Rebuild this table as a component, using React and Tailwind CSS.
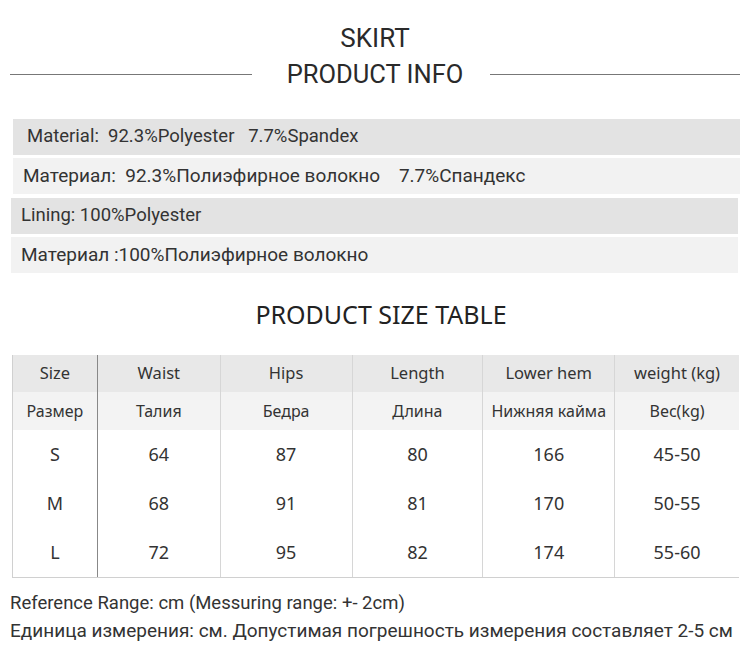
const headers = [
  ['Size', 'Размер'],
  ['Waist', 'Талия'],
  ['Hips', 'Бедра'],
  ['Length', 'Длина'],
  ['Lower hem', 'Нижняя кайма'],
  ['weight (kg)', 'Bec(kg)'],
];

const rows = [
  ['S', '64', '87', '80', '166', '45-50'],
  ['M', '68', '91', '81', '170', '50-55'],
  ['L', '72', '95', '82', '174', '55-60'],
];

const widths = ['w-[85px]', 'w-[123px]', 'w-[132px]', 'w-[131px]', 'w-[132px]', 'w-[124px]'];
const borders = ['border-r border-[#888]', 'border-r border-[#d6d6d6]', 'border-r border-[#d6d6d6]', 'border-r border-[#d6d6d6]', 'border-r border-[#d6d6d6]', ''];

export default function App() {
  return (
    <div className="w-[750px] h-[668px] bg-white text-[#333] overflow-hidden font-['Roboto',sans-serif]">
      {/* Titles */}
      <div className="pt-[23px] text-center text-[26px] leading-[30px] text-[#2a2a2a]">
        SKIRT
      </div>
      <div className="flex items-center mt-[6px] px-[10px]">
        <div className="w-[242px] h-px bg-[#777]" />
        <div className="flex-1 text-center text-[25.5px] leading-[30px] text-[#2a2a2a] pl-[8px]">PRODUCT INFO</div>
        <div className="w-[250px] h-px bg-[#777]" />
      </div>

      {/* Material rows */}
      <div className="mt-[30px] flex flex-col text-[18.5px] text-[#333]">
        <div className="ml-[13px] mr-[10px] h-[36px] bg-[#e3e3e3] flex items-center pl-[14px]">
          Material:&nbsp; 92.3%Polyester &nbsp; 7.7%Spandex
        </div>
        <div className="mt-[3px] ml-[13px] mr-[10px] h-[36px] bg-[#f2f2f2] flex items-center pl-[10px] text-[19px]">
          Материал:&nbsp; 92.3%Полиэфирное волокно &nbsp;&nbsp; 7.7%Спандекс
        </div>
        <div className="mt-[4px] ml-[11px] mr-[12px] h-[36px] bg-[#e3e3e3] flex items-center pl-[10px]">
          Lining: 100%Polyester
        </div>
        <div className="mt-[3px] ml-[11px] mr-[12px] h-[36px] bg-[#f2f2f2] flex items-center pl-[10px] text-[19px]">
          Материал :100%Полиэфирное волокно
        </div>
      </div>

      <div className="mt-[27px] pl-[12px] text-center text-[25px] leading-[28px] text-[#222] font-['Noto_Sans',sans-serif]">
        PRODUCT SIZE TABLE
      </div>

      {/* Size table */}
      <div className="mt-[27px] ml-[12px] w-[727px] border-l border-b border-[#d0d0d0] font-['Noto_Sans',sans-serif] text-[#333]">
        <div className="flex h-[37px] bg-[#e8e8e8] text-[16.5px] leading-[20px]">
          {headers.map((h, i) => (
            <div key={i} className={`${widths[i]} ${borders[i]} flex items-center justify-center pb-[1px]`}>
              {h[0]}
            </div>
          ))}
        </div>
        <div className="flex h-[38px] bg-[#f3f3f3] text-[16px] leading-[20px]">
          {headers.map((h, i) => (
            <div key={i} className={`${widths[i]} ${borders[i]} flex items-center justify-center`}>
              {h[1]}
            </div>
          ))}
        </div>
        {rows.map((r, ri) => (
          <div key={ri} className="flex h-[49px] text-[18px]">
            {r.map((c, i) => (
              <div key={i} className={`${widths[i]} ${borders[i]} flex items-center justify-center`}>
                {c}
              </div>
            ))}
          </div>
        ))}
      </div>

      {/* Footer notes */}
      <div className="mt-[11px] pl-[10px] text-[18.5px] leading-[28px] text-[#333]">
        <div>Reference Range: cm (Messuring range: +- 2cm)</div>
        <div className="text-[19px]">Единица измерения: см. Допустимая погрешность измерения составляет 2-5 см</div>
      </div>
    </div>
  );
}
